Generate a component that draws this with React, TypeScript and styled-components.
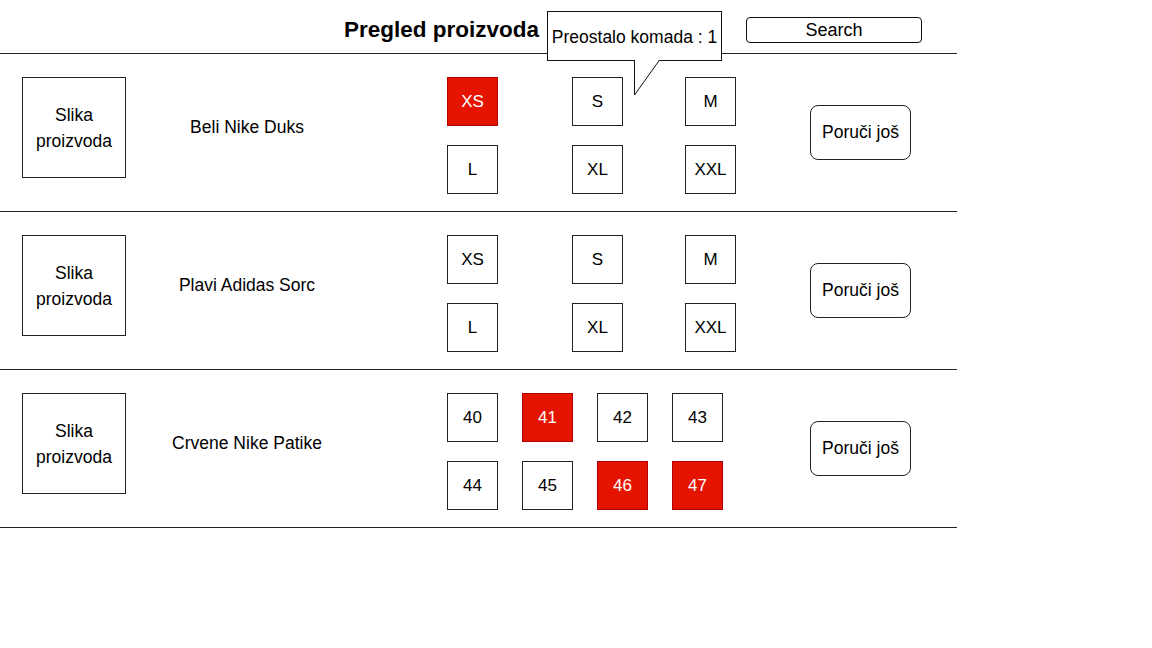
import React from "react";
import styled, { createGlobalStyle } from "styled-components";

const GlobalStyle = createGlobalStyle`
  html, body {
    margin: 0;
    padding: 0;
    background: #ffffff;
  }
  body {
    font-family: "Liberation Sans", Arial, sans-serif;
    color: #000;
  }
`;

const Page = styled.div`
  width: 957px;
  position: relative;
`;

const Header = styled.header`
  position: relative;
  box-sizing: border-box;
  height: 54px;
  border-bottom: 1px solid #222;
  display: flex;
  align-items: flex-start;
  justify-content: space-between;
  padding: 17px 35px 0 344px;
`;

const Title = styled.h1`
  margin: 0;
  font-size: 22.5px;
  line-height: 26px;
  font-weight: bold;
`;

const SearchBox = styled.div`
  box-sizing: border-box;
  width: 176px;
  height: 26px;
  border: 1px solid #111;
  border-radius: 4px;
  display: flex;
  align-items: center;
  justify-content: center;
  font-size: 18px;
`;

const Tooltip = styled.div`
  position: absolute;
  left: 547px;
  top: 11px;
  box-sizing: border-box;
  width: 175px;
  height: 50px;
  border: 1px solid #111;
  background: #fff;
  display: flex;
  align-items: center;
  justify-content: center;
  font-size: 17.5px;
  padding-top: 3px;
  z-index: 2;
`;

const TooltipTail = styled.svg`
  position: absolute;
  left: 85px;
  top: 47px;
  overflow: visible;
`;

const Row = styled.section`
  box-sizing: border-box;
  height: 158px;
  border-bottom: 1px solid #222;
  display: flex;
  align-items: flex-start;
  padding-top: 23px;
`;

const ImageBox = styled.div`
  box-sizing: border-box;
  margin-left: 22px;
  width: 104px;
  height: 101px;
  border: 1px solid #222;
  display: flex;
  align-items: center;
  justify-content: center;
  text-align: center;
  font-size: 17.5px;
  line-height: 26px;
`;

const Name = styled.div`
  width: 242px;
  height: 101px;
  display: flex;
  align-items: center;
  justify-content: center;
  font-size: 17.5px;
`;

const SizeArea = styled.div`
  margin-left: 79px;
  width: 363px;
`;

const SizeGrid = styled.div<{ $cols: string }>`
  display: grid;
  grid-template-columns: ${(p) => p.$cols};
  row-gap: 19px;
`;

const SizeBox = styled.div<{ $out?: boolean }>`
  box-sizing: border-box;
  width: 51px;
  height: 49px;
  border: 1px solid ${(p) => (p.$out ? "#b20000" : "#222")};
  background: ${(p) => (p.$out ? "#e51400" : "#fff")};
  color: ${(p) => (p.$out ? "#fff" : "#000")};
  display: flex;
  align-items: center;
  justify-content: center;
  font-size: 17px;
`;

const OrderButton = styled.button`
  box-sizing: border-box;
  margin-top: 28px;
  width: 101px;
  height: 55px;
  border: 1px solid #222;
  border-radius: 8px;
  background: #fff;
  font-family: "Liberation Sans", Arial, sans-serif;
  font-size: 17.5px;
  color: #000;
  padding: 0;
`;

type Size = { label: string; out?: boolean };
type Product = { name: string; cols: string; sizes: Size[] };

const clothesCols = "125px 113px 51px";
const shoeCols = "75px 75px 75px 51px";

const products: Product[] = [
  {
    name: "Beli Nike Duks",
    cols: clothesCols,
    sizes: [
      { label: "XS", out: true },
      { label: "S" },
      { label: "M" },
      { label: "L" },
      { label: "XL" },
      { label: "XXL" },
    ],
  },
  {
    name: "Plavi Adidas Sorc",
    cols: clothesCols,
    sizes: [
      { label: "XS" },
      { label: "S" },
      { label: "M" },
      { label: "L" },
      { label: "XL" },
      { label: "XXL" },
    ],
  },
  {
    name: "Crvene Nike Patike",
    cols: shoeCols,
    sizes: [
      { label: "40" },
      { label: "41", out: true },
      { label: "42" },
      { label: "43" },
      { label: "44" },
      { label: "45" },
      { label: "46", out: true },
      { label: "47", out: true },
    ],
  },
];

export default function App() {
  return (
    <>
      <GlobalStyle />
      <Page>
        <Header>
          <Title>Pregled proizvoda</Title>
          <SearchBox>Search</SearchBox>
          <Tooltip>
            Preostalo komada : 1
            <TooltipTail width="28" height="38" viewBox="0 0 28 38">
              <polygon points="1.5,0 1.5,36 27,0" fill="#fff" />
              <polyline
                points="1.5,1 1.5,36 26.5,1"
                fill="none"
                stroke="#111"
                strokeWidth="1"
              />
            </TooltipTail>
          </Tooltip>
        </Header>
        {products.map((p) => (
          <Row key={p.name}>
            <ImageBox>
              Slika
              <br />
              proizvoda
            </ImageBox>
            <Name>{p.name}</Name>
            <SizeArea>
              <SizeGrid $cols={p.cols}>
                {p.sizes.map((s) => (
                  <SizeBox key={s.label} $out={s.out}>
                    {s.label}
                  </SizeBox>
                ))}
              </SizeGrid>
            </SizeArea>
            <OrderButton>Poruči još</OrderButton>
          </Row>
        ))}
      </Page>
    </>
  );
}
